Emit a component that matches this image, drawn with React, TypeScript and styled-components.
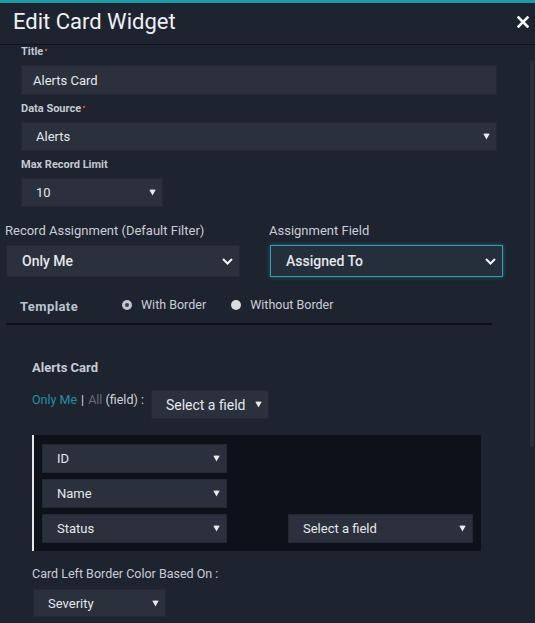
import styled, { createGlobalStyle } from 'styled-components';

const GlobalStyle = createGlobalStyle`
  * { box-sizing: border-box; }
  html, body { margin: 0; padding: 0; background: #1e2330; }
  body { font-family: Roboto, "Noto Sans", "Liberation Sans", sans-serif; color: #dfe3e8; }
`;

const Modal = styled.div`
  width: 535px;
  height: 623px;
  overflow: hidden;
  border-top: 3px solid #1f9ba6;
  background: #1e2330;
  display: flex;
  flex-direction: column;
`;

const Header = styled.div`
  height: 42px;
  flex: none;
  display: flex;
  align-items: center;
  justify-content: space-between;
  padding: 0 6px 4px 13px;
  border-bottom: 1px solid #0f131a;
`;

const Title = styled.h1`
  margin: 0;
  font-size: 22px;
  font-weight: 400;
  color: #eef0f3;
`;

const Close = styled.button`
  border: 0;
  background: none;
  padding: 0;
  width: 12px;
  height: 12px;
  display: flex;
  svg { display: block; }
`;

const Body = styled.div`
  flex: 1;
  display: flex;
  min-height: 0;
`;

const Content = styled.div`
  flex: 1;
  min-width: 0;
`;

const ScrollTrack = styled.div`
  width: 4px;
  margin-right: 1px;
  padding-top: 15px;
`;

const Thumb = styled.div`
  height: 387px;
  border-radius: 2px;
  background: #2a303c;
`;

const Form = styled.div`
  padding-left: 21px;
`;

const Field = styled.div`
  margin-top: 7px;
  &:first-child { margin-top: 0; }
`;

const Label = styled.div`
  font-size: 11px;
  font-weight: 700;
  line-height: 14px;
  height: 14px;
  color: #c4c9d1;
  margin-bottom: 6px;
`;

const Required = styled.span`
  color: #d9434a;
  font-size: 9px;
  line-height: 0;
  vertical-align: 2px;
  margin-left: 1px;
`;

const Box = styled.div<{ $w: string; $h: number; $size?: number; $pad?: number; $focus?: boolean; $bold?: boolean }>`
  width: ${(p) => p.$w};
  height: ${(p) => p.$h}px;
  display: flex;
  align-items: center;
  justify-content: space-between;
  padding: 0 6px 0 ${(p) => p.$pad ?? 14}px;
  background: ${(p) => (p.$focus ? '#252e3b' : '#2a303c')};
  border: 1px solid ${(p) => (p.$focus ? '#2ba3ad' : '#232833')};
  box-shadow: ${(p) => (p.$focus ? '0 0 4px rgba(43, 163, 173, 0.55)' : 'none')};
  font-size: ${(p) => p.$size ?? 13}px;
  font-weight: ${(p) => (p.$bold ? 500 : 400)};
  color: #e4e7eb;
  white-space: nowrap;
  svg { flex: none; display: block; }
`;

const Triangle = () => (
  <svg width="7" height="7" viewBox="0 0 7 7">
    <path d="M0.3 0.8 Q3.5 0 6.7 0.8 L3.5 6.6 Z" fill="#e8eaed" />
  </svg>
);

const Chevron = () => (
  <svg width="11" height="7" viewBox="0 0 11 7">
    <path d="M1 1 L5.5 5.5 L10 1" fill="none" stroke="#f2f4f6" strokeWidth="2" />
  </svg>
);

const AssignRow = styled.div`
  display: grid;
  grid-template-columns: 234px 233px;
  column-gap: 30px;
  padding-left: 6px;
  margin-top: 16px;
`;

const AssignLabel = styled.div`
  font-size: 13px;
  line-height: 16px;
  color: #c9cdd4;
  margin: 0 0 6px -1px;
`;

const TemplateRow = styled.div`
  margin: 18px 0 0 6px;
  width: 486px;
  height: 30px;
  padding: 0 0 6px 14px;
  display: flex;
  align-items: center;
  border-bottom: 2px solid #0d1117;
`;

const TemplateLabel = styled.div`
  width: 102px;
  font-size: 13px;
  font-weight: 700;
  letter-spacing: 0.4px;
  color: #b8c3d1;
`;

const RadioOption = styled.label`
  display: flex;
  align-items: center;
  gap: 9px;
  margin-right: 25px;
  font-size: 12.5px;
  color: #c9cdd4;
  margin-top: -3px;
`;

const RadioDot = styled.span<{ $checked?: boolean }>`
  width: 10px;
  height: 10px;
  border-radius: 50%;
  background: ${(p) => (p.$checked ? '#c2c6cc' : '#d8dbdf')};
  display: flex;
  align-items: center;
  justify-content: center;
  &::after {
    content: '';
    width: 4px;
    height: 4px;
    border-radius: 50%;
    background: ${(p) => (p.$checked ? '#3b4049' : 'transparent')};
  }
`;

const Preview = styled.div`
  padding-left: 32px;
`;

const CardTitle = styled.div`
  margin-top: 35px;
  font-size: 13px;
  font-weight: 700;
  line-height: 16px;
  color: #c6ccd6;
`;

const FilterRow = styled.div`
  display: flex;
  align-items: flex-start;
  margin-top: 14px;
  gap: 7px;
`;

const FilterText = styled.div`
  margin-top: 2px;
  font-size: 12.5px;
  line-height: 16px;
  color: #cfd3d9;
`;

const Link = styled.span<{ $active?: boolean }>`
  color: ${(p) => (p.$active ? '#2590a0' : '#646b76')};
`;

const Pipe = styled.span`
  color: #d6d9de;
  margin: 0 4px;
`;

const DarkCard = styled.div`
  margin-top: 16px;
  width: 449px;
  border-left: 2px solid #e6e7e9;
  background: #0d1119;
  padding: 9px 8px 8px;
  display: grid;
  grid-template-columns: 185px 185px;
  column-gap: 61px;
  row-gap: 6px;
`;

const Empty = styled.div``;

const BorderLabel = styled.div`
  margin-top: 15px;
  font-size: 12.5px;
  line-height: 16px;
  color: #c9cdd4;
`;

const SeverityWrap = styled.div`
  margin: 7px 0 0 1px;
`;

export default function App() {
  return (
    <>
      <GlobalStyle />
      <Modal>
        <Header>
          <Title>Edit Card Widget</Title>
          <Close type="button" aria-label="Close">
            <svg width="12" height="12" viewBox="0 0 12 12">
              <path d="M1.5 1.5 L10.5 10.5 M10.5 1.5 L1.5 10.5" stroke="#f4f5f7" strokeWidth="2.6" strokeLinecap="square" />
            </svg>
          </Close>
        </Header>
        <Body>
          <Content>
            <Form>
              <Field>
                <Label>
                  Title<Required>•</Required>
                </Label>
                <Box $w="476px" $h={30} $pad={11}>
                  Alerts Card
                </Box>
              </Field>
              <Field>
                <Label>
                  Data Source<Required>•</Required>
                </Label>
                <Box $w="476px" $h={29}>
                  Alerts
                  <Triangle />
                </Box>
              </Field>
              <Field>
                <Label>Max Record Limit</Label>
                <Box $w="142px" $h={29}>
                  10
                  <Triangle />
                </Box>
              </Field>
            </Form>

            <AssignRow>
              <div>
                <AssignLabel>Record Assignment (Default Filter)</AssignLabel>
                <Box $w="234px" $h={32} $size={14} $pad={15} $bold>
                  Only Me
                  <Chevron />
                </Box>
              </div>
              <div>
                <AssignLabel>Assignment Field</AssignLabel>
                <Box $w="233px" $h={32} $size={14} $pad={15} $bold $focus>
                  Assigned To
                  <Chevron />
                </Box>
              </div>
            </AssignRow>

            <TemplateRow>
              <TemplateLabel>Template</TemplateLabel>
              <RadioOption>
                <RadioDot $checked />
                With Border
              </RadioOption>
              <RadioOption>
                <RadioDot />
                Without Border
              </RadioOption>
            </TemplateRow>

            <Preview>
              <CardTitle>Alerts Card</CardTitle>
              <FilterRow>
                <FilterText>
                  <Link $active>Only Me</Link>
                  <Pipe>|</Pipe>
                  <Link>All</Link> (field) :
                </FilterText>
                <Box $w="118px" $h={29} $size={14} $pad={14}>
                  Select a field
                  <Triangle />
                </Box>
              </FilterRow>

              <DarkCard>
                <Box $w="185px" $h={29} $size={13}>
                  ID
                  <Triangle />
                </Box>
                <Empty />
                <Box $w="185px" $h={29} $size={13}>
                  Name
                  <Triangle />
                </Box>
                <Empty />
                <Box $w="185px" $h={29} $size={13}>
                  Status
                  <Triangle />
                </Box>
                <Box $w="185px" $h={29} $size={13}>
                  Select a field
                  <Triangle />
                </Box>
              </DarkCard>

              <BorderLabel>Card Left Border Color Based On :</BorderLabel>
              <SeverityWrap>
                <Box $w="133px" $h={28}>
                  Severity
                  <Triangle />
                </Box>
              </SeverityWrap>
            </Preview>
          </Content>
          <ScrollTrack>
            <Thumb />
          </ScrollTrack>
        </Body>
      </Modal>
    </>
  );
}
